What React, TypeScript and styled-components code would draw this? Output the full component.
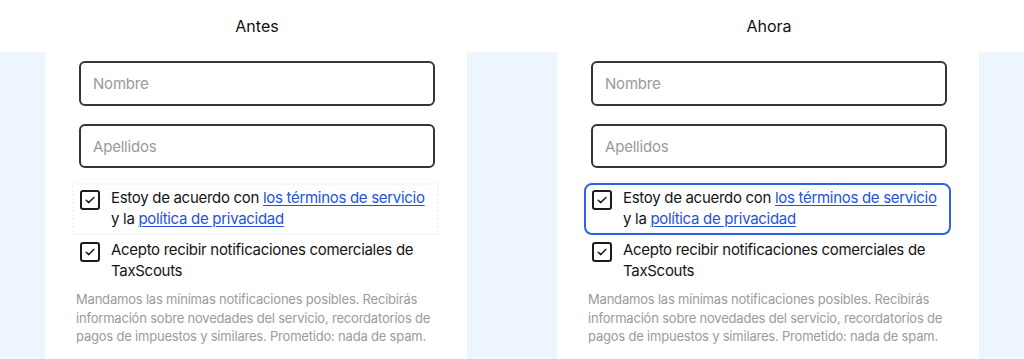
import { styled, createGlobalStyle } from 'styled-components';

const GlobalStyle = createGlobalStyle`
  html, body {
    margin: 0;
    padding: 0;
    background: #ffffff;
    font-family: Inter, "Noto Sans", sans-serif;
  }
`;

export const Page = styled.div`
  display: grid;
  grid-template-columns: 1fr 1fr;
  width: 1024px;
  height: 359px;
  overflow: hidden;
`;

export const Column = styled.section`
  display: flex;
  flex-direction: column;
`;

export const Title = styled.h2`
  margin: 0;
  height: 52px;
  display: flex;
  align-items: center;
  justify-content: center;
  font-size: 16px;
  font-weight: 400;
  color: #111;
  padding-left: 2px;
`;

export const Band = styled.div`
  flex: 1;
  background: #edf5ff;
  padding: 0 45px;
  display: flex;
`;

export const Panel = styled.div`
  flex: 1;
  background: #ffffff;
  padding: 9px 32px 0 34px;
  display: flex;
  flex-direction: column;
`;

export const Field = styled.div`
  height: 45px;
  box-sizing: border-box;
  border: 2px solid #353535;
  border-radius: 6px;
  display: flex;
  align-items: center;
  padding: 0 12px;
  font-size: 15px;
  letter-spacing: -0.2px;
  color: #9a9a9a;
  margin-bottom: 18px;

  & + & {
    height: 44px;
    margin-bottom: 15px;
  }
`;

export const CheckRow = styled.label<{ $variant?: 'dotted' | 'focus' }>`
  display: flex;
  align-items: flex-start;
  gap: 11px;
  margin: 0 -4px 0 -7px;
  padding: 3px 6px 4px 6px;
  font-size: 15px;
  letter-spacing: -0.3px;
  line-height: 20.5px;
  color: #141414;
  border: ${({ $variant }) =>
    $variant === 'focus'
      ? '2px solid #2f63e6'
      : $variant === 'dotted'
        ? '2px dotted #eef3fc'
        : '2px solid transparent'};
  border-radius: ${({ $variant }) => ($variant === 'dotted' ? '0' : '8px')};
`;

export const Box = styled.span`
  flex: none;
  width: 20px;
  height: 20px;
  box-sizing: border-box;
  margin-top: 2px;
  border: 2px solid #1c1c1c;
  border-radius: 3px;
  display: flex;
  align-items: center;
  justify-content: center;
`;

export const Link = styled.a`
  color: #2153df;
  text-decoration: underline;
  text-underline-offset: 2px;
  text-decoration-thickness: 1px;
`;

export const Note = styled.p`
  margin: 3px 2px 0 -3px;
  font-size: 13px;
  letter-spacing: -0.2px;
  line-height: 18.5px;
  color: #9b9b9b;
`;

const Check = () => (
  <svg width="10" height="8" viewBox="0 0 10 8" fill="none">
    <path d="M1.2 4.2 L3.8 6.6 L8.8 1.4" stroke="#1c1c1c" strokeWidth="1.5" strokeLinecap="round" strokeLinejoin="round" />
  </svg>
);

const FormColumn = ({ title, variant }: { title: string; variant: 'dotted' | 'focus' }) => (
  <Column>
    <Title>{title}</Title>
    <Band>
      <Panel>
        <Field>Nombre</Field>
        <Field>Apellidos</Field>
        <CheckRow $variant={variant}>
          <Box>
            <Check />
          </Box>
          <span>
            Estoy de acuerdo con <Link href="#">los términos de servicio</Link> y la{' '}
            <Link href="#">política de privacidad</Link>
          </span>
        </CheckRow>
        <CheckRow>
          <Box>
            <Check />
          </Box>
          <span>Acepto recibir notificaciones comerciales de TaxScouts</span>
        </CheckRow>
        <Note>
          Mandamos las mínimas notificaciones posibles. Recibirás información sobre novedades
          del servicio, recordatorios de pagos de impuestos y similares. Prometido: nada de spam.
        </Note>
      </Panel>
    </Band>
  </Column>
);

export default function App() {
  return (
    <>
      <GlobalStyle />
      <Page>
        <FormColumn title="Antes" variant="dotted" />
        <FormColumn title="Ahora" variant="focus" />
      </Page>
    </>
  );
}
